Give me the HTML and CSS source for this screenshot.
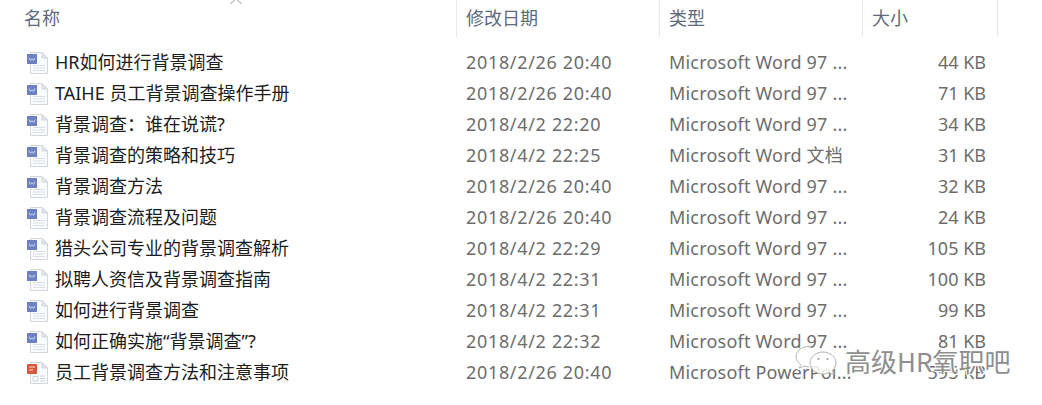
FILE: index.html
```html
<!DOCTYPE html>
<html lang="zh-CN">
<head>
  <meta charset="UTF-8">
  <title>背景调查</title>
  <link rel="stylesheet" href="styles.css">
</head>
<body>
<svg class="defs" width="0" height="0">
  <symbol id="word" viewBox="0 0 22 22">
    <path d="M3.500 .5H15L20.500 6V21.500H3.500Z" fill="#fafbfd" stroke="#d3d6dd"/>
    <path d="M15 .5V6H20.500Z" fill="#e2e4e9" stroke="#d3d6dd"/>
    <path d="M6 13.500H18M6 16H18M6 18.500H18" stroke="#dcdfe5"/>
    <rect x="0" y="2" width="10" height="10" fill="#6c80c2"/>
    <path d="M2 5.500L3.500 8.500L5 6.500L6.500 8.500L8 5.500" fill="none" stroke="#c9d2ee"/>
  </symbol>
  <symbol id="ppt" viewBox="0 0 22 22">
    <path d="M3.500 .5H15L20.500 6V21.500H3.500Z" fill="#fafbfd" stroke="#d3d6dd"/>
    <path d="M15 .5V6H20.500Z" fill="#e2e4e9" stroke="#d3d6dd"/>
    <path d="M6 14.500H11V19H6ZM13 14H18M13 16.500H18M13 19H18" fill="none" stroke="#cfd2d8"/>
    <rect x="0" y="2" width="10" height="10" rx="1" fill="#d8573b"/>
    <path d="M2 5H8M2 8H6" stroke="#f8e0d8" stroke-width="1.200"/>
  </symbol>
</svg>

<div class="list">
  <svg class="sort-arrow" width="14" height="5" viewBox="0 0 14 5"><path d="M1 5L7 0L13 5" fill="none" stroke="#9a9ea6"/></svg>

  <div class="row head">
    <div class="cell">名称</div>
    <div class="cell">修改日期</div>
    <div class="cell">类型</div>
    <div class="cell">大小</div>
  </div>

  <div class="rows">
    <div class="row"><div class="name"><svg class="icon"><use href="#word"/></svg>HR如何进行背景调查</div><div class="muted date">2018/2/26 20:40</div><div class="muted type">Microsoft Word 97 ...</div><div class="muted size">44 KB</div></div>
    <div class="row"><div class="name"><svg class="icon"><use href="#word"/></svg>TAIHE 员工背景调查操作手册</div><div class="muted date">2018/2/26 20:40</div><div class="muted type">Microsoft Word 97 ...</div><div class="muted size">71 KB</div></div>
    <div class="row"><div class="name"><svg class="icon"><use href="#word"/></svg>背景调查：谁在说谎?</div><div class="muted date">2018/4/2 22:20</div><div class="muted type">Microsoft Word 97 ...</div><div class="muted size">34 KB</div></div>
    <div class="row"><div class="name"><svg class="icon"><use href="#word"/></svg>背景调查的策略和技巧</div><div class="muted date">2018/4/2 22:25</div><div class="muted type">Microsoft Word 文档</div><div class="muted size">31 KB</div></div>
    <div class="row"><div class="name"><svg class="icon"><use href="#word"/></svg>背景调查方法</div><div class="muted date">2018/2/26 20:40</div><div class="muted type">Microsoft Word 97 ...</div><div class="muted size">32 KB</div></div>
    <div class="row"><div class="name"><svg class="icon"><use href="#word"/></svg>背景调查流程及问题</div><div class="muted date">2018/2/26 20:40</div><div class="muted type">Microsoft Word 97 ...</div><div class="muted size">24 KB</div></div>
    <div class="row"><div class="name"><svg class="icon"><use href="#word"/></svg>猎头公司专业的背景调查解析</div><div class="muted date">2018/4/2 22:29</div><div class="muted type">Microsoft Word 97 ...</div><div class="muted size">105 KB</div></div>
    <div class="row"><div class="name"><svg class="icon"><use href="#word"/></svg>拟聘人资信及背景调查指南</div><div class="muted date">2018/4/2 22:31</div><div class="muted type">Microsoft Word 97 ...</div><div class="muted size">100 KB</div></div>
    <div class="row"><div class="name"><svg class="icon"><use href="#word"/></svg>如何进行背景调查</div><div class="muted date">2018/4/2 22:31</div><div class="muted type">Microsoft Word 97 ...</div><div class="muted size">99 KB</div></div>
    <div class="row"><div class="name"><svg class="icon"><use href="#word"/></svg>如何正确实施“背景调查”?</div><div class="muted date">2018/4/2 22:32</div><div class="muted type">Microsoft Word 97 ...</div><div class="muted size">81 KB</div></div>
    <div class="row"><div class="name"><svg class="icon"><use href="#ppt"/></svg>员工背景调查方法和注意事项</div><div class="muted date">2018/2/26 20:40</div><div class="muted type">Microsoft PowerPoi...</div><div class="muted size">595 KB</div></div>
  </div>

  <div class="watermark">
    <svg class="wechat" width="42" height="31" viewBox="0 0 42 31">
      <path d="M16 1C7.500 1 1 6 1 11.500C1 14.500 2.500 17 5.500 19.500L4.500 23L9 21C10.500 21.500 12 21.800 14 21.800" fill="none" stroke="#fff" stroke-width="3"/>
      <path d="M16 1C7.500 1 1 6 1 11.500C1 14.500 2.500 17 5.500 19.500L4.500 23L9 21C10.500 21.500 12 21.800 14 21.800" fill="none" stroke="#b5b5b5"/>
      <path d="M28 7C35 7 41 12 41 18C41 21 39.500 23.500 37.500 25L38.500 29.500L34 27.500C32 28.500 30 29 28 29C21 29 15 24 15 18C15 12 21 7 28 7Z" fill="#fff" fill-opacity=".85" stroke="#b5b5b5"/>
      <circle cx="23.500" cy="14" r="1.100" fill="#a0a0a0"/>
      <circle cx="32.500" cy="14" r="1.100" fill="#a0a0a0"/>
    </svg>
    <span>高级HR氧职吧</span>
  </div>
</div>
</body>
</html>
```

FILE: styles.css
```css
body {
  margin: 0;
  background: #fff;
  font-family: "Noto Sans", "Noto Sans CJK SC", sans-serif;
  font-size: 18px;
  color: #1c1c1c;
  overflow: hidden;
}
.defs {
  display: block;
}
.list {
  position: relative;
  width: 1042px;
  height: 405px;
  overflow: hidden;
}
.sort-arrow {
  position: absolute;
  left: 229px;
  top: -1px;
}
.row {
  display: grid;
  grid-template-columns: 456px 203px 203px 135px;
  height: 31px;
  line-height: 31px;
  white-space: nowrap;
}
.head {
  grid-template-columns: 457px 203px 203px 135px;
  height: 36px;
  line-height: 37px;
  color: #5d6b7c;
}
.head .cell {
  border-right: 1px solid #e6e8eb;
  box-sizing: border-box;
}
.head .cell:first-child {
  padding-left: 24px;
}
.head .cell:nth-child(n+2) {
  padding-left: 9px;
}
.rows {
  padding-top: 11px;
}
.name {
  display: flex;
  align-items: center;
  padding-left: 27px;
}
.icon {
  width: 22px;
  height: 22px;
  margin-right: 6px;
  flex: none;
}
.muted {
  padding-left: 10px;
  color: #6d6d6d;
}
.date {
  letter-spacing: 0.67px;
}
.type {
  letter-spacing: 0.2px;
}
.size {
  padding: 0 11px 0 0;
  text-align: right;
}
.watermark {
  position: absolute;
  left: 795px;
  top: 345px;
  display: flex;
  align-items: center;
  gap: 8px;
}
.watermark span {
  font-family: "Noto Sans CJK SC", sans-serif;
  font-size: 26px;
  line-height: 28px;
  color: #8e8e8e;
  text-shadow: 1px 0 #fff, -1px 0 #fff, 0 1px #fff, 0 -1px #fff, 1px 1px #fff, -1px -1px #fff;
}
```
